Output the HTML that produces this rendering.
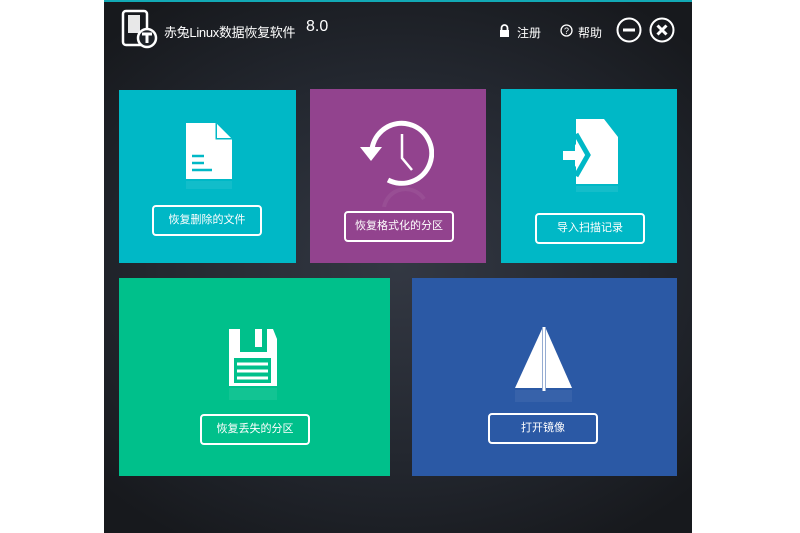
<!DOCTYPE html>
<html><head><meta charset="utf-8"><style>
body{margin:0;width:800px;height:533px;background:#fff;position:relative;overflow:hidden;font-family:"Liberation Sans","Noto Sans CJK SC",sans-serif}
.win{position:absolute;left:104px;top:0;width:588px;height:533px;background:radial-gradient(ellipse 70% 60% at 50% 50%,#333843 0%,#23272f 60%,#17191d 100%)}
.line{position:absolute;left:0;top:0;width:588px;height:2px;background:#12a9b5}
.t{position:absolute}
.tile{position:absolute}
.btn{position:absolute;width:106px;height:27px;line-height:27px;border:2px solid #fff;border-radius:4px;color:#fff;font-size:11px;text-align:center}
</style></head><body>
<div class="win">
<div class="line"></div>
<svg class="t" style="left:16px;top:9px" width="40" height="40" viewBox="0 0 40 40">
<rect x="3" y="2" width="24" height="34" rx="3" fill="none" stroke="#fff" stroke-width="2.5"/>
<path d="M8 6 h12 v18 h-12z" fill="#fff" opacity=".9"/>
<circle cx="27" cy="29" r="9" fill="#1e2228" stroke="#fff" stroke-width="2.5"/>
<path d="M22 25 h10 M27 25 v9" stroke="#fff" stroke-width="3"/>
</svg>
<div class="t" style="left:60px;top:22px;color:#fff;font-size:13px;letter-spacing:-0.3px">赤兔Linux数据恢复软件</div>
<div class="t" style="left:202px;top:18px;color:#fff;font-size:16px">8.0</div>
<svg class="t" style="left:395px;top:24px" width="11" height="14" viewBox="0 0 11 14"><path d="M2.5 6V4a3 3 0 0 1 6 0v2" fill="none" stroke="#fff" stroke-width="1.8"/><rect x="1" y="6" width="9" height="7" fill="#fff"/></svg>
<div class="t" style="left:413px;top:24px;color:#fff;font-size:12px">注册</div>
<svg class="t" style="left:456px;top:24px" width="13" height="13" viewBox="0 0 13 13"><circle cx="6.5" cy="6.5" r="5.5" fill="none" stroke="#fff" stroke-width="1.3"/><text x="6.5" y="10" font-size="9" fill="#fff" text-anchor="middle" font-family="Liberation Sans">?</text></svg>
<div class="t" style="left:474px;top:24px;color:#fff;font-size:12px">帮助</div>
<svg class="t" style="left:512px;top:17px" width="26" height="26" viewBox="0 0 26 26"><circle cx="13" cy="13" r="11.5" fill="none" stroke="#fff" stroke-width="2"/><path d="M7 13h12" stroke="#fff" stroke-width="3"/></svg>
<svg class="t" style="left:545px;top:17px" width="26" height="26" viewBox="0 0 26 26"><circle cx="13" cy="13" r="11.5" fill="none" stroke="#fff" stroke-width="2"/><path d="M8.5 8.5l9 9M17.5 8.5l-9 9" stroke="#fff" stroke-width="3"/></svg>

<div class="tile" style="left:15px;top:90px;width:177px;height:173px;background:#00b8c6">
<svg class="t" style="left:67px;top:33px" width="48" height="75" viewBox="0 0 48 75"><path d="M0 0h30l16 16v40H0z" fill="#fff"/><path d="M30 0v16h16" fill="#00b8c6" stroke="#00b8c6"/><path d="M31 1v14h14z" fill="#fff"/><path d="M6 33h12M6 40h12M6 47h20" stroke="#00b8c6" stroke-width="2.5"/><path d="M0 58h46v8H0z" fill="#fff" opacity=".07"/></svg>
<div class="btn" style="left:33px;top:115px">恢复删除的文件</div></div>

<div class="tile" style="left:206px;top:89px;width:176px;height:174px;background:#92438e">
<svg class="t" style="left:48px;top:28px" width="76" height="90" viewBox="0 0 76 90"><path d="M14 32 A30 30 0 1 1 30 63" fill="none" stroke="#fff" stroke-width="5"/><path d="M2 30h22l-11 14z" fill="#fff"/><path d="M44 17v24l10 12" fill="none" stroke="#fff" stroke-width="2.5"/><path d="M26 90 A22 22 0 0 1 66 82" fill="none" stroke="#fff" stroke-width="4" opacity=".06"/></svg>
<div class="btn" style="left:34px;top:122px">恢复格式化的分区</div></div>

<div class="tile" style="left:397px;top:89px;width:176px;height:174px;background:#00b8c6">
<svg class="t" style="left:60px;top:30px" width="60" height="75" viewBox="0 0 60 75"><path d="M15 0h28l14 18v47H15z" fill="#fff"/><path d="M15 15l12 21-12 21" fill="none" stroke="#00b8c6" stroke-width="5"/><path d="M2 32h13v9H2z" fill="#fff"/><path d="M14 25l9 11.5-9 11.5z" fill="#fff"/><path d="M15 67h42v6H15z" fill="#fff" opacity=".08"/></svg>
<div class="btn" style="left:34px;top:124px">导入扫描记录</div></div>

<div class="tile" style="left:15px;top:278px;width:271px;height:198px;background:#00c08b">
<svg class="t" style="left:109px;top:51px" width="50" height="80" viewBox="0 0 50 80"><path d="M1 0h44l4 10v47H1z" fill="#fff"/><path d="M12 0v23h27V0z" fill="#00c08b"/><rect x="27" y="0" width="7" height="18" fill="#fff"/><rect x="6" y="29" width="37" height="25" fill="#00c08b"/><path d="M9 35h31M9 42h31M9 49h31" stroke="#fff" stroke-width="3"/><path d="M1 59h48v12H1z" fill="#fff" opacity=".07"/></svg>
<div class="btn" style="left:81px;top:136px">恢复丢失的分区</div></div>

<div class="tile" style="left:308px;top:278px;width:265px;height:198px;background:#2b59a5">
<svg class="t" style="left:102px;top:48px" width="60" height="80" viewBox="0 0 60 80"><path d="M28 3L1 62h27z" fill="#fff"/><path d="M32 3L58 62H32z" fill="#fff"/><rect x="28.5" y="1" width="3" height="64" fill="#fff"/><path d="M1 64h57v12H1z" fill="#fff" opacity=".06"/></svg>
<div class="btn" style="left:76px;top:135px">打开镜像</div></div>
</div>
</body></html>
